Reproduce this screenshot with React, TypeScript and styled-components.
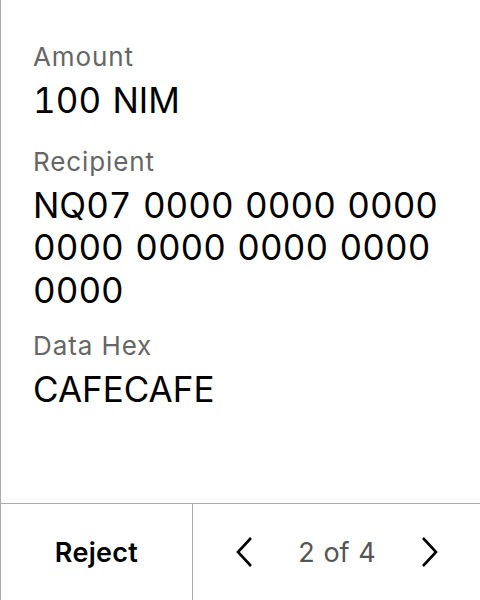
import React from "react";
import styled, { createGlobalStyle } from "styled-components";

const Global = createGlobalStyle`
  html, body { margin: 0; padding: 0; background: #fff; }
  body { font-family: Inter, "Noto Sans", sans-serif; }
  #root { height: 100vh; }
`;

const Screen = styled.div`
  height: 600px;
  width: 480px;
  box-sizing: border-box;
  border-left: 1px solid #ababab;
  display: flex;
  flex-direction: column;
  background: #fff;
`;

const Content = styled.div`
  flex: 1;
  padding: 42px 28px 0 32px;
  display: flex;
  flex-direction: column;
`;

const Field = styled.div<{ $spaceBefore?: number }>`
  display: flex;
  flex-direction: column;
  gap: 7px;
  margin-top: ${(p) => p.$spaceBefore ?? 0}px;
`;

const Label = styled.div`
  font-size: 26px;
  line-height: 30px;
  letter-spacing: 0.9px;
  color: #666666;
`;

const Value = styled.div`
  font-size: 35px;
  line-height: 42.5px;
  word-spacing: 2px;
  font-variant-numeric: tabular-nums;
  color: #000;
  word-wrap: break-word;
`;

const Footer = styled.div`
  height: 96px;
  border-top: 1px solid #ababab;
  display: grid;
  grid-template-columns: 192px 1fr;
`;

const RejectButton = styled.button`
  all: unset;
  display: flex;
  align-items: center;
  justify-content: center;
  font-family: Inter, sans-serif;
  font-weight: 600;
  font-size: 27px;
  letter-spacing: 0.3px;
  color: #000;
  border-right: 1px solid #ababab;
`;

const Pager = styled.div`
  display: flex;
  align-items: center;
  justify-content: space-between;
  padding: 0 41px 0 42px;
`;

const PageText = styled.span`
  font-size: 27px;
  word-spacing: 1px;
  color: #555;
`;

const Chevron = ({ dir }: { dir: "left" | "right" }) => (
  <svg width="18" height="32" viewBox="0 0 18 32" fill="none">
    <path
      d={dir === "left" ? "M16 2 L3 16 L16 30" : "M2 2 L15 16 L2 30"}
      stroke="#000"
      strokeWidth="2.6"
      strokeLinecap="butt"
      strokeLinejoin="miter"
    />
  </svg>
);

export default function App() {
  return (
    <>
      <Global />
      <Screen>
        <Content>
          <Field>
            <Label>Amount</Label>
            <Value>100 NIM</Value>
          </Field>
          <Field $spaceBefore={25}>
            <Label>Recipient</Label>
            <Value>NQ07 0000 0000 0000 0000 0000 0000 0000 0000</Value>
          </Field>
          <Field $spaceBefore={20}>
            <Label>Data Hex</Label>
            <Value>CAFECAFE</Value>
          </Field>
        </Content>
        <Footer>
          <RejectButton>Reject</RejectButton>
          <Pager>
            <Chevron dir="left" />
            <PageText>2 of 4</PageText>
            <Chevron dir="right" />
          </Pager>
        </Footer>
      </Screen>
    </>
  );
}
